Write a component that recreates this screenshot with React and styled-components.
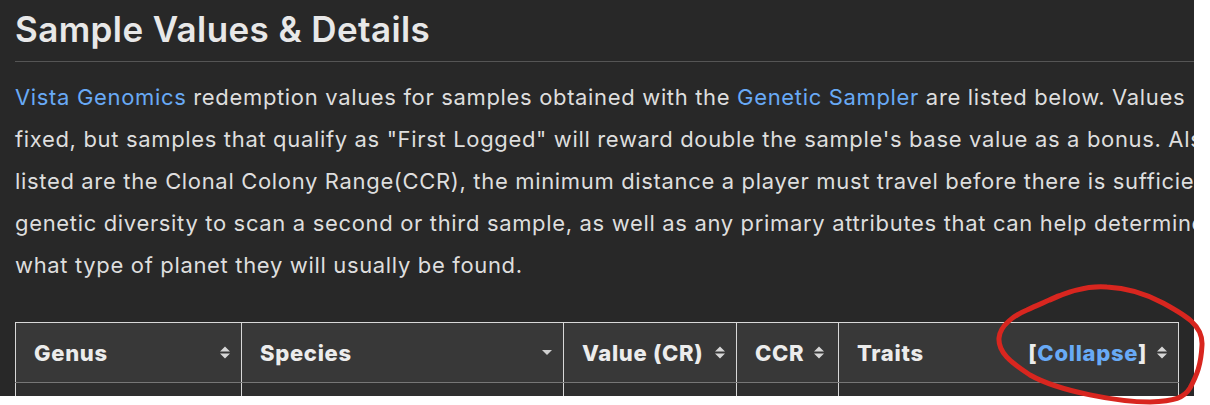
import React from 'react';
import styled, { createGlobalStyle } from 'styled-components';

const GlobalStyle = createGlobalStyle`
  html, body {
    margin: 0;
    padding: 0;
    background: #ffffff;
  }
`;

const Screen = styled.div`
  position: relative;
  width: 1210px;
  height: 405px;
  overflow: hidden;
  background: #ffffff;
`;

const Page = styled.div`
  width: 1194px;
  height: 396px;
  overflow: hidden;
  background: #282828;
  font-family: 'Inter', 'Liberation Sans', sans-serif;
  color: #e6e6e6;
`;

const Content = styled.div`
  width: 1300px;
  padding: 0 15px;
  box-sizing: border-box;
`;

const Heading = styled.h2`
  margin: 0;
  padding: 10px 0 13px;
  font-size: 35px;
  font-weight: 600;
  letter-spacing: 0.4px;
  line-height: 38px;
  color: #e8e8e8;
  border-bottom: 1px solid #555555;
`;

const Text = styled.p`
  margin: 14px 0 0;
  font-size: 22px;
  letter-spacing: 0.66px;
  line-height: 42px;
  color: #dedede;
`;

const Line = styled.span`
  display: block;
  white-space: nowrap;
`;

const Link = styled.a`
  color: #68aaf6;
  text-decoration: none;
`;

const Table = styled.table`
  margin-top: 36px;
  width: 1164px;
  border-collapse: collapse;
  table-layout: fixed;
  border-top: 1px solid #d8d8d8;
  border-left: 1px solid #d8d8d8;
  border-right: 1px solid #d8d8d8;
`;

const HeadCell = styled.th`
  width: ${(p) => p.$w}px;
  height: 60px;
  padding: 0 11px 0 18px;
  background: #383838;
  border-right: 1px solid #d8d8d8;
  border-bottom: 1px solid #777777;
  text-align: left;
  font-size: 22px;
  font-weight: 800;
  letter-spacing: 0.7px;
  color: #ececec;
  box-sizing: border-box;
  white-space: nowrap;
`;

const HeadInner = styled.div`
  display: flex;
  align-items: center;
  justify-content: ${(p) => (p.$tight ? 'flex-start' : 'space-between')};
  gap: 10px;
`;

const Collapse = styled.span`
  margin-left: auto;
  color: #ececec;
  & a {
    color: #68aaf6;
  }
`;

const BodyCell = styled.td`
  height: 40px;
  background: #2f2f2f;
  border-right: 1px solid #d8d8d8;
`;

const SortIcon = () => (
  <svg width="10" height="13" viewBox="0 0 10 13">
    <path d="M0 5.5 L5 0.5 L10 5.5 Z M0 7.5 L5 12.5 L10 7.5 Z" fill="#d6d6d6" />
  </svg>
);

const DownIcon = () => (
  <svg width="10" height="5" viewBox="0 0 10 5">
    <path d="M0 0 L5 5 L10 0 Z" fill="#cfcfcf" />
  </svg>
);

const Annotation = styled.svg`
  position: absolute;
  left: 0;
  top: 0;
  pointer-events: none;
`;

const lines = [
  [<Link key="a">Vista Genomics</Link>, ' redemption values for samples obtained with the ', <Link key="b">Genetic Sampler</Link>, ' are listed below. Values\u00a0 are'],
  ['fixed, but samples that qualify as "First Logged" will reward double the sample\'s base value as a bonus. Also'],
  ['listed are the Clonal Colony Range(CCR), the minimum distance a player must travel before there is sufficient'],
  ['genetic diversity to scan a second or third sample, as well as any primary attributes that can help determine'],
  ['what type of planet they will usually be found.'],
];

export default function App() {
  return (
    <Screen>
      <GlobalStyle />
      <Page>
        <Content>
          <Heading>Sample Values &amp; Details</Heading>
          <Text>
            {lines.map((parts, i) => (
              <Line key={i}>{parts}</Line>
            ))}
          </Text>
          <Table>
            <thead>
              <tr>
                <HeadCell $w={226}>
                  <HeadInner>Genus <SortIcon /></HeadInner>
                </HeadCell>
                <HeadCell $w={322}>
                  <HeadInner>Species <DownIcon /></HeadInner>
                </HeadCell>
                <HeadCell $w={173}>
                  <HeadInner>Value (CR) <SortIcon /></HeadInner>
                </HeadCell>
                <HeadCell $w={102}>
                  <HeadInner $tight>CCR <SortIcon /></HeadInner>
                </HeadCell>
                <HeadCell>
                  <HeadInner>
                    Traits
                    <Collapse>[<a>Collapse</a>]</Collapse>
                    <SortIcon />
                  </HeadInner>
                </HeadCell>
              </tr>
            </thead>
            <tbody>
              <tr>
                <BodyCell />
                <BodyCell />
                <BodyCell />
                <BodyCell />
                <BodyCell />
              </tr>
            </tbody>
          </Table>
        </Content>
      </Page>
      <Annotation width="1210" height="405" viewBox="0 0 1210 405">
        <path
          d="M1050 300 C1075 288 1095 286 1107 287 C1130 288 1148 295 1163 303 C1185 315 1203 325 1202 345 C1201 365 1197 375 1190 388 C1184 398 1175 401 1150 402 C1120 402 1060 392 1030 375 C1010 362 998 352 999 338 C1000 325 1015 315 1027 310 C1040 304 1050 300 1058 296"
          fill="none"
          stroke="#d8261f"
          strokeWidth="5"
          strokeLinecap="round"
          strokeLinejoin="round"
        />
      </Annotation>
    </Screen>
  );
}
